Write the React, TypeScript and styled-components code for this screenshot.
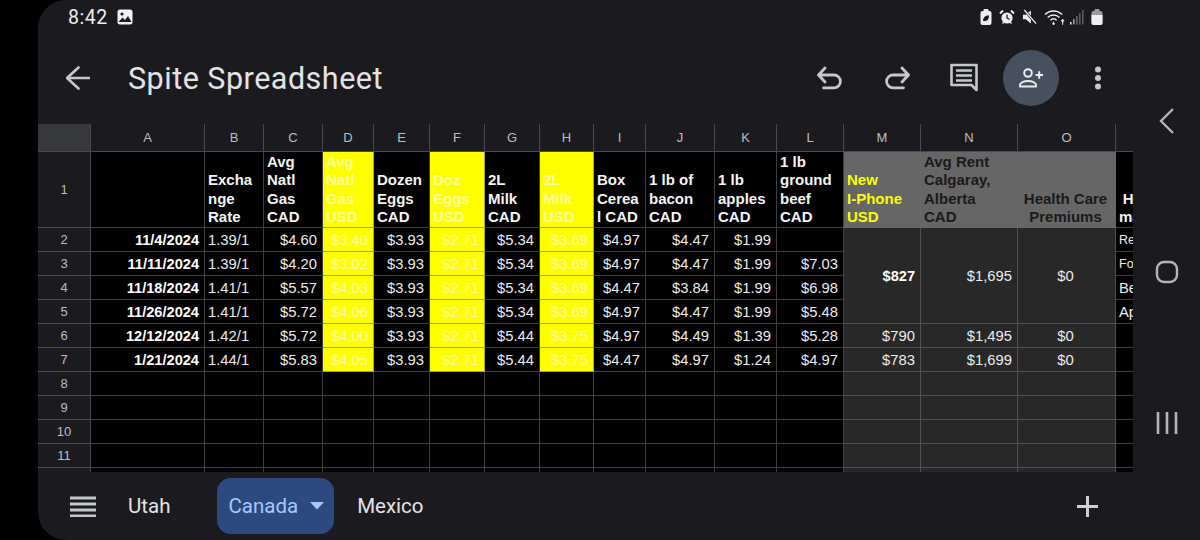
import React from "react";
import styled, { createGlobalStyle } from "styled-components";

type Tone = "plain" | "yellow" | "grey" | "shade";

interface CellProps {
  $tone?: Tone;
  $align?: "left" | "right" | "center";
  $bold?: boolean;
  $rows?: number;
  $bottom?: boolean;
  $ink?: string;
  $small?: boolean;
}

const GlobalStyle = createGlobalStyle`
  html, body {
    margin: 0;
    padding: 0;
    background: #000;
    overflow: hidden;
  }
`;

const Page = styled.div`
  width: 1200px;
  height: 540px;
  padding-left: 38px;
  box-sizing: border-box;
  background: #000;
`;

const Screen = styled.div`
  display: flex;
  height: 540px;
  background: #1b1b1f;
  border-radius: 28px 0 0 28px;
  overflow: hidden;
`;

const Main = styled.div`
  display: flex;
  flex-direction: column;
  width: 1095px;
`;

const StatusBar = styled.div`
  display: flex;
  align-items: center;
  justify-content: space-between;
  height: 34px;
  padding: 0 30px;
  color: #ededed;
  box-sizing: border-box;
`;

const StatusGroup = styled.div`
  display: flex;
  align-items: center;
  gap: 7px;
`;

const Clock = styled.span`
  font: 400 19.5px Roboto, sans-serif;
  letter-spacing: 0.5px;
  margin-right: 2px;
`;

const SignalSlot = styled.span`
  display: flex;
  margin-left: -3px;
`;

const Toolbar = styled.div`
  display: flex;
  align-items: center;
  height: 90px;
  padding: 0 7px 2px 28px;
  box-sizing: border-box;
`;

const Title = styled.h1`
  flex: 1;
  margin: 0 0 0 38px;
  font: 400 30.5px Roboto, sans-serif;
  letter-spacing: 0.5px;
  color: #e3e3e6;
`;

const Actions = styled.div`
  display: flex;
  gap: 11px;
`;

const IconButton = styled.button<{ $filled?: boolean }>`
  display: flex;
  align-items: center;
  justify-content: center;
  width: 56px;
  height: 56px;
  padding: 0;
  border: 0;
  border-radius: 50%;
  background: ${(props) => (props.$filled ? "#46505f" : "transparent")};
`;

const Sheet = styled.div`
  height: 348px;
  overflow: hidden;
  background: #000;
`;

const Grid = styled.div`
  display: grid;
  grid-template-columns: 53px 114px 59px 59px 51px 56px 55px 55px 54px 52px 69px 62px 67px 77px 97px 98px 100px;
  grid-template-rows: 28px 76px repeat(10, 24px) 12px;
  width: 1196px;
  font-family: "Liberation Sans", Arial, sans-serif;
`;

const ColumnHead = styled.div`
  display: flex;
  align-items: center;
  justify-content: center;
  background: #1b1b1f;
  border-right: 1px solid #4a4a4d;
  border-bottom: 1px solid #4a4a4d;
  color: #bdbdc0;
  font-size: 13px;
  box-sizing: border-box;
`;

const Corner = styled(ColumnHead)`
  background: #37383b;
`;

const RowHead = styled(ColumnHead)``;

const toneColor: Record<Tone, string> = {
  plain: "#000",
  yellow: "#ffff00",
  grey: "#666",
  shade: "#282828",
};

const cellSize = (props: CellProps) => {
  if (props.$small) return "12.5px";
  if (props.$bottom) return "15px";
  return props.$bold ? "14.6px" : "14.8px";
};

const Cell = styled.div<CellProps>`
  display: flex;
  align-items: ${(props) => (props.$bottom ? "flex-end" : "center")};
  justify-content: ${(props) =>
    props.$align === "right"
      ? "flex-end"
      : props.$align === "center"
        ? "center"
        : "flex-start"};
  grid-row: span ${(props) => props.$rows || 1};
  padding: ${(props) => (props.$bottom ? "0 5px 1px 3px" : "1px 5px 0 3px")};
  background: ${(props) => toneColor[props.$tone || "plain"]};
  border-right: 1px solid rgba(105, 105, 105, 0.6);
  border-bottom: 1px solid rgba(105, 105, 105, 0.6);
  box-sizing: border-box;
  overflow: hidden;
  color: ${(props) => props.$ink || "#ececec"};
  font-size: ${cellSize};
  font-weight: ${(props) => (props.$bold ? 700 : 400)};
  line-height: 18.2px;
  white-space: pre-line;
  text-align: ${(props) => props.$align || "left"};
`;

const MarketLabel = styled.span`
  text-align: center;
`;

const NavRail = styled.div`
  display: flex;
  flex: 1;
  flex-direction: column;
  align-items: center;
  gap: 121px;
  padding-top: 106px;
`;

const NavItem = styled.div`
  display: flex;
  align-items: center;
  justify-content: center;
  height: 30px;
`;

const TabBar = styled.div`
  display: flex;
  align-items: center;
  height: 68px;
  padding: 0 35px 0 32px;
  box-sizing: border-box;
`;

const TabList = styled.div`
  display: flex;
  align-items: center;
  gap: 11px;
  margin-left: 20px;
  flex: 1;
`;

const Tab = styled.div<{ $active?: boolean }>`
  display: flex;
  align-items: center;
  gap: 12px;
  height: 56px;
  padding: 0 ${(props) => (props.$active ? "10px 0 11px" : "12px")};
  border-radius: 14px;
  background: ${(props) => (props.$active ? "#2c4a80" : "transparent")};
  color: ${(props) => (props.$active ? "#a8c7fa" : "#e3e3e6")};
  font: 400 20.5px Roboto, sans-serif;
  &:first-child {
    margin-right: 24px;
  }
`;

const headers: { text: string; tone?: Tone; ink?: string; align?: "left" | "center" }[] = [
  { text: "" },
  { text: "Excha\nnge\nRate" },
  { text: "Avg\nNatl\nGas\nCAD" },
  { text: "Avg\nNatl\nGas\nUSD", tone: "yellow", ink: "#ffff9c" },
  { text: "Dozen\nEggs\nCAD" },
  { text: "Doz\nEggs\nUSD", tone: "yellow", ink: "#ffff9c" },
  { text: "2L\nMilk\nCAD" },
  { text: "2L\nMilk\nUSD", tone: "yellow", ink: "#ffff9c" },
  { text: "Box\nCerea\nl CAD" },
  { text: "1 lb of\nbacon\nCAD" },
  { text: "1 lb\napples\nCAD" },
  { text: "1 lb\nground\nbeef\nCAD" },
  { text: "New\nI-Phone\nUSD", tone: "grey", ink: "#ffff00" },
  { text: "Avg Rent\nCalgaray,\nAlberta\nCAD", tone: "grey", ink: "#1a1a1a" },
  { text: "Health Care\nPremiums", tone: "grey", ink: "#1a1a1a", align: "center" },
];

const rows = [
  ["11/4/2024", "1.39/1", "$4.60", "$3.40", "$3.93", "$2.71", "$5.34", "$3.69", "$4.97", "$4.47", "$1.99", ""],
  ["11/11/2024", "1.39/1", "$4.20", "$3.02", "$3.93", "$2.71", "$5.34", "$3.69", "$4.97", "$4.47", "$1.99", "$7.03"],
  ["11/18/2024", "1.41/1", "$5.57", "$4.03", "$3.93", "$2.71", "$5.34", "$3.69", "$4.47", "$3.84", "$1.99", "$6.98"],
  ["11/26/2024", "1.41/1", "$5.72", "$4.06", "$3.93", "$2.71", "$5.34", "$3.69", "$4.97", "$4.47", "$1.99", "$5.48"],
  ["12/12/2024", "1.42/1", "$5.72", "$4.00", "$3.93", "$2.71", "$5.44", "$3.75", "$4.97", "$4.49", "$1.39", "$5.28"],
  ["1/21/2024", "1.44/1", "$5.83", "$4.05", "$3.93", "$2.71", "$5.44", "$3.75", "$4.47", "$4.97", "$1.24", "$4.97"],
];

const notes = ["Rent", "Food", "Best", "Apple"];
const letters = "ABCDEFGHIJKLMNO".split("");
const yellowColumns = [3, 5, 7];

const line = { fill: "none", strokeLinecap: "round", strokeLinejoin: "round" } as const;

const BackIcon = () => (
  <svg width="24" height="24" viewBox="0 0 24 24">
    <path d="M1 12h22M12.5 1.5 1 12l11.500 10.500" {...line} stroke="#c6c7cb" strokeWidth="2.6" />
  </svg>
);

const UndoIcon = () => (
  <svg width="26" height="26" viewBox="0 0 26 26">
    <path d="M8 3 1.500 10 8 17M1.500 10H17a6.400 6.400 0 0 1 0 12.800H6.500" {...line} stroke="#c6c7cb" strokeWidth="2.8" />
  </svg>
);

const RedoIcon = () => (
  <svg width="26" height="26" viewBox="0 0 26 26">
    <path d="M18 3l6.500 7L18 17M24.500 10H9a6.400 6.400 0 0 0 0 12.800h10.500" {...line} stroke="#c6c7cb" strokeWidth="2.8" />
  </svg>
);

const CommentIcon = () => (
  <svg width="30" height="30" viewBox="0 0 30 30">
    <path d="M2.500 2h25v25l-5-5h-20z" {...line} stroke="#c6c7cb" strokeWidth="2.600" />
    <path d="M7 7.500h16M7 12.500h16M7 17.500h16" fill="none" stroke="#c6c7cb" strokeWidth="2.500" />
  </svg>
);

const PersonAddIcon = () => (
  <svg width="26" height="22" viewBox="0 0 26 22">
    <circle cx="10" cy="6" r="3.800" fill="none" stroke="#e9ebf0" strokeWidth="2" />
    <path d="M2 19.500v-1.500c0-2.500 4-4 8-4s8 1.500 8 4v1.500z" {...line} stroke="#e9ebf0" strokeWidth="2" />
    <path d="M17.500 8h7.500M21.200 4.300v7.500" fill="none" stroke="#e9ebf0" strokeWidth="2" />
  </svg>
);

const DotsIcon = () => (
  <svg width="8" height="24" viewBox="0 0 8 24">
    <circle cx="4" cy="3.500" r="3" fill="#c6c7cb" />
    <circle cx="4" cy="12" r="3" fill="#c6c7cb" />
    <circle cx="4" cy="20.500" r="3" fill="#c6c7cb" />
  </svg>
);

const PictureIcon = () => (
  <svg width="16" height="16" viewBox="0 0 16 16">
    <rect x="0.500" y="0.500" width="15" height="15" rx="2.500" fill="#f2f2f2" />
    <circle cx="5" cy="5" r="1.600" fill="#1b1b1f" />
    <path d="M1.500 13 5.500 8.500 8 11l3-4 3.500 6z" fill="#1b1b1f" />
  </svg>
);

const LeafBatteryIcon = () => (
  <svg width="12" height="16" viewBox="0 0 12 16">
    <rect x="0.500" y="2" width="11" height="14" rx="2" fill="#efefef" />
    <rect x="3.500" y="0" width="5" height="3" rx="1" fill="#efefef" />
    <path d="M3 12c0-3.500 2-5.500 6-5.500 0 4-2 5.500-4.500 5.500z" fill="#1b1b1f" />
  </svg>
);

const AlarmIcon = () => (
  <svg width="16" height="16" viewBox="0 0 16 16">
    <circle cx="8" cy="9" r="5.600" fill="#efefef" />
    <path d="M8 5.500V9l2.500 1.500" fill="none" stroke="#1b1b1f" strokeWidth="1.300" />
    <path d="M1 4.500 4 1.500M15 4.500l-3-3" fill="none" stroke="#efefef" strokeWidth="2" />
    <path d="M3.500 14.500l1.500-1.500M12.500 14.500 11 13" fill="none" stroke="#efefef" strokeWidth="1.300" />
  </svg>
);

const MuteIcon = () => (
  <svg width="15" height="16" viewBox="0 0 16 16">
    <path d="M1 5.500h3L9.500 1v14L4 10.500H1z" fill="#efefef" />
    <path d="M2.500 0.500 15 15" stroke="#1b1b1f" strokeWidth="2.800" />
    <path d="M2.500 0.500 15 15" stroke="#efefef" strokeWidth="1.400" />
  </svg>
);

const WifiIcon = () => (
  <svg width="22" height="16" viewBox="0 0 23 16">
    <path d="M1 5.500c5-5 13-5 18 0M3.800 8.500c3.500-3.400 9-3.400 12.400 0M6.800 11.300c2-1.800 4.500-1.800 6.400 0" fill="none" stroke="#efefef" strokeWidth="1.500" />
    <path d="M10 13v3M8.800 14.500l1.200 1.500 1.200-1.500M19.500 16v-5M18 12.500l1.500-1.800 1.500 1.800" fill="none" stroke="#efefef" strokeWidth="1.100" />
  </svg>
);

const SignalIcon = () => (
  <svg width="14" height="16" viewBox="0 0 14 16">
    <rect x="0" y="13" width="1.600" height="2.500" fill="#d8d8d8" />
    <rect x="3" y="10" width="1.600" height="5.500" fill="#9a9a9a" />
    <rect x="6" y="7" width="1.600" height="8.500" fill="#666" />
    <rect x="9" y="4" width="1.600" height="11.500" fill="#5c5c5c" />
    <rect x="12" y="1" width="1.600" height="14.500" fill="#5c5c5c" />
  </svg>
);

const BatteryIcon = () => (
  <svg width="12" height="16" viewBox="0 0 12 16">
    <rect x="0.500" y="2" width="11" height="14" rx="2" fill="#9c9c9c" />
    <rect x="3.500" y="0" width="5" height="3" rx="1" fill="#9c9c9c" />
    <path d="M0.500 6h11v8a2 2 0 0 1-2 2h-7a2 2 0 0 1-2-2z" fill="#efefef" />
  </svg>
);

const ListIcon = () => (
  <svg width="26" height="21" viewBox="0 0 26 21">
    <path d="M0 2h26M0 8h26M0 14h26M0 20h26" stroke="#c6c7cb" strokeWidth="2.800" />
  </svg>
);

const CaretIcon = () => (
  <svg width="14" height="8" viewBox="0 0 14 8">
    <path d="M0 0h14L7 7.500z" fill="#a8c7fa" />
  </svg>
);

const PlusIcon = () => (
  <svg width="21" height="21" viewBox="0 0 21 21">
    <path d="M0 10.500h21M10.500 0v21" stroke="#cfcfd2" strokeWidth="3" />
  </svg>
);

const NavBackIcon = () => (
  <svg width="15" height="26" viewBox="0 0 15 26">
    <path d="M14 1 2 13l12 12" fill="none" stroke="#b4b4b8" strokeWidth="2.400" />
  </svg>
);

const NavHomeIcon = () => (
  <svg width="24" height="24" viewBox="0 0 24 24">
    <rect x="2" y="2" width="20" height="20" rx="7" fill="none" stroke="#b4b4b8" strokeWidth="2.400" />
  </svg>
);

const NavRecentIcon = () => (
  <svg width="22" height="22" viewBox="0 0 22 22">
    <path d="M2 0v22M11 0v22M20 0v22" stroke="#b4b4b8" strokeWidth="2.600" />
  </svg>
);

const App = () => {
  return (
    <Page>
      <GlobalStyle />
      <Screen>
        <Main>
          <StatusBar>
            <StatusGroup>
              <Clock>8:42</Clock>
              <PictureIcon />
            </StatusGroup>
            <StatusGroup>
              <LeafBatteryIcon />
              <AlarmIcon />
              <MuteIcon />
              <WifiIcon />
              <SignalSlot>
                <SignalIcon />
              </SignalSlot>
              <BatteryIcon />
            </StatusGroup>
          </StatusBar>

          <Toolbar>
            <BackIcon />
            <Title>Spite Spreadsheet</Title>
            <Actions>
              <IconButton><UndoIcon /></IconButton>
              <IconButton><RedoIcon /></IconButton>
              <IconButton><CommentIcon /></IconButton>
              <IconButton $filled><PersonAddIcon /></IconButton>
              <IconButton><DotsIcon /></IconButton>
            </Actions>
          </Toolbar>

          <Sheet>
            <Grid>
              <Corner />
              {letters.map((letter) => (
                <ColumnHead key={letter}>{letter}</ColumnHead>
              ))}
              <ColumnHead />

              <RowHead>1</RowHead>
              {headers.map((head, i) => (
                <Cell
                  key={i}
                  $bold
                  $bottom
                  $tone={head.tone}
                  $ink={head.ink || "#f4f4f4"}
                  $align={head.align}
                >
                  {head.text}
                </Cell>
              ))}
              <Cell $bold $bottom $ink="#f4f4f4">
                <MarketLabel>{"Home\nmarket"}</MarketLabel>
              </Cell>

              {rows.map((row, r) => (
                <React.Fragment key={r}>
                  <RowHead>{r + 2}</RowHead>
                  {row.map((value, c) => {
                    const yellow = yellowColumns.includes(c);
                    return (
                      <Cell
                        key={c}
                        $align={c === 1 ? "left" : "right"}
                        $bold={c === 0}
                        $tone={yellow ? "yellow" : "plain"}
                        $ink={yellow ? "#ffff9c" : c === 0 ? "#fff" : undefined}
                      >
                        {value}
                      </Cell>
                    );
                  })}
                  {r === 0 && (
                    <>
                      <Cell $rows={4} $tone="shade" $align="right" $bold $ink="#fff">$827</Cell>
                      <Cell $rows={4} $tone="shade" $align="right">$1,695</Cell>
                      <Cell $rows={4} $tone="shade" $align="center">$0</Cell>
                    </>
                  )}
                  {r === 4 && (
                    <>
                      <Cell $tone="shade" $align="right">$790</Cell>
                      <Cell $tone="shade" $align="right">$1,495</Cell>
                      <Cell $tone="shade" $align="center">$0</Cell>
                    </>
                  )}
                  {r === 5 && (
                    <>
                      <Cell $tone="shade" $align="right">$783</Cell>
                      <Cell $tone="shade" $align="right">$1,699</Cell>
                      <Cell $tone="shade" $align="center">$0</Cell>
                    </>
                  )}
                  <Cell $small={r < 2}>{notes[r] || ""}</Cell>
                </React.Fragment>
              ))}

              {[8, 9, 10, 11, 12].map((n) => (
                <React.Fragment key={n}>
                  <RowHead>{n < 12 ? n : ""}</RowHead>
                  {Array.from({ length: 16 }, (_, c) => (
                    <Cell key={c} $tone={c >= 12 && c < 15 ? "shade" : "plain"} />
                  ))}
                </React.Fragment>
              ))}
            </Grid>
          </Sheet>

          <TabBar>
            <ListIcon />
            <TabList>
              <Tab>Utah</Tab>
              <Tab $active>
                Canada
                <CaretIcon />
              </Tab>
              <Tab>Mexico</Tab>
            </TabList>
            <PlusIcon />
          </TabBar>
        </Main>

        <NavRail>
          <NavItem><NavBackIcon /></NavItem>
          <NavItem><NavHomeIcon /></NavItem>
          <NavItem><NavRecentIcon /></NavItem>
        </NavRail>
      </Screen>
    </Page>
  );
};

export default App;
